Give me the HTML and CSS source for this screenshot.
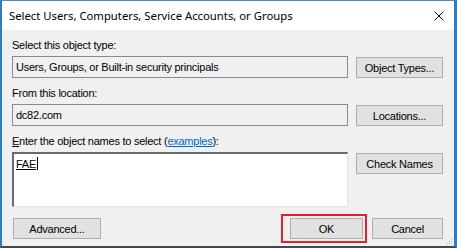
FILE: index.html
```html
<!DOCTYPE html>
<html lang="en">
<head>
  <meta charset="UTF-8" />
  <title>Select Users, Computers, Service Accounts, or Groups</title>
  <link rel="stylesheet" href="styles.css">
</head>
<body>
  <div class="window">
    <div class="titlebar">
      <div class="title">Select Users, Computers, Service Accounts, or Groups</div>
      <svg class="close" width="10" height="10" viewBox="0 0 10 10">
        <path d="M0.5 0.5 L9.5 9.5 M9.5 0.5 L0.5 9.5" stroke="#000" stroke-width="1" fill="none"/>
      </svg>
    </div>

    <div class="content">
      <div class="label label-first">Select this object type:</div>
      <div class="row">
        <div class="field">Users, Groups, or Built-in security principals</div>
        <button class="btn side-btn">Object Types...</button>
      </div>

      <div class="label">From this location:</div>
      <div class="row">
        <div class="field">dc82.com</div>
        <button class="btn side-btn">Locations...</button>
      </div>

      <div class="label label-names"><u>E</u>nter the object names to select (<a href="#">examples</a>):</div>
      <div class="row row-names">
        <div class="names-box"><span class="resolved">FAE</span><span class="caret"></span></div>
        <button class="btn side-btn">Check Names</button>
      </div>

      <div class="bottom">
        <button class="btn advanced-btn">Advanced...</button>
        <div class="bottom-right">
          <div class="ok-wrap">
            <button class="btn ok-btn">OK</button>
            <div class="highlight"></div>
          </div>
          <button class="btn cancel-btn">Cancel</button>
        </div>
      </div>
    </div>

    <svg class="grip" width="7" height="7" viewBox="0 0 7 7">
      <rect x="5" y="1" width="1" height="1" fill="#b8b8b8"/>
      <rect x="3" y="3" width="1" height="1" fill="#b8b8b8"/>
      <rect x="5" y="3" width="1" height="1" fill="#b8b8b8"/>
      <rect x="1" y="5" width="1" height="1" fill="#b8b8b8"/>
      <rect x="3" y="5" width="1" height="1" fill="#b8b8b8"/>
      <rect x="5" y="5" width="1" height="1" fill="#b8b8b8"/>
    </svg>
  </div>
</body>
</html>
```

FILE: styles.css
```css
body {
  margin: 0;
  font-family: 'Liberation Sans', Arial, sans-serif;
  font-size: 11px;
  letter-spacing: -0.25px;
  color: #000;
  background-color: #f0f0f0;
}

.window {
  position: relative;
  width: 452px;
  height: 245px;
  background-color: #f0f0f0;
  border-top: 1px solid #4d8ac6;
  border-left: 2px solid #2f7cc4;
  border-right: 3px solid #2f7cc4;
  border-bottom: 2px solid #3a4a5a;
  overflow: hidden;
}

.titlebar {
  height: 29px;
  background-color: #ffffff;
  display: flex;
  align-items: center;
  justify-content: space-between;
  padding: 0 9px 0 7px;
}

.title {
  font-family: 'Noto Sans', sans-serif;
  font-size: 11.3px;
  letter-spacing: 0;
  padding-bottom: 1px;
}

.close {
  margin-right: 1px;
}

.content {
  padding: 9px 10px 0 10px;
}

.label {
  height: 13px;
  line-height: 13px;
  margin-bottom: 4px;
}

.label a {
  color: #0066cc;
}

.label-names {
  margin-top: 9px;
}

.row {
  display: flex;
  align-items: flex-start;
  gap: 8px;
  margin-bottom: 9px;
}

.field {
  width: 331px;
  height: 20px;
  line-height: 20px;
  border: 1px solid #8a8a8a;
  padding-left: 3px;
}

.btn {
  font-family: 'Liberation Sans', Arial, sans-serif;
  font-size: 11px;
  letter-spacing: -0.25px;
  color: #000;
  background-color: #e1e1e1;
  border: 1px solid #adadad;
  height: 21px;
  padding: 0;
}

.side-btn {
  width: 87px;
  margin-top: 1px;
}

.row-names {
  margin-bottom: 11px;
}

.names-box {
  width: 336px;
  height: 55px;
  background-color: #ffffff;
  border-top: 2px solid #696969;
  border-left: 2px solid #696969;
  border-right: 1px solid #e3e3e3;
  border-bottom: 1px solid #e3e3e3;
  padding: 3px 0 0 2px;
  box-sizing: border-box;
  display: flex;
  align-items: flex-start;
}

.resolved {
  text-decoration: underline;
  line-height: 14px;
}

.caret {
  width: 1px;
  height: 13px;
  background-color: #000;
  margin-left: 1px;
}

.bottom {
  display: flex;
  justify-content: space-between;
  align-items: center;
}

.advanced-btn {
  width: 88px;
  margin-left: 1px;
}

.bottom-right {
  display: flex;
  gap: 9px;
  margin-right: 1px;
}

.ok-wrap {
  position: relative;
}

.ok-btn {
  width: 73px;
  display: block;
}

.highlight {
  position: absolute;
  left: -9px;
  top: -4px;
  right: -4px;
  bottom: -4px;
  border: 2px solid #e0202a;
}

.cancel-btn {
  width: 71px;
}

.grip {
  position: absolute;
  right: 1px;
  bottom: 1px;
}
```
